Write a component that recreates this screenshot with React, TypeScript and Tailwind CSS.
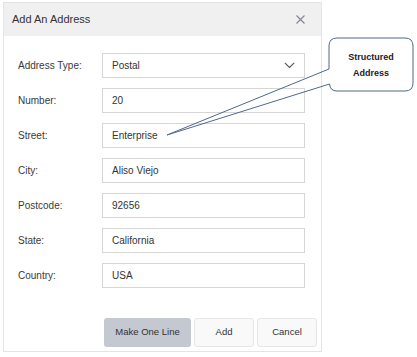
const fields = [
  { label: 'Number:', value: '20' },
  { label: 'Street:', value: 'Enterprise' },
  { label: 'City:', value: 'Aliso Viejo' },
  { label: 'Postcode:', value: '92656' },
  { label: 'State:', value: 'California' },
  { label: 'Country:', value: 'USA' },
]

function Row({ label, children }: { label: string; children: React.ReactNode }) {
  return (
    <div className="flex h-[25px] items-center">
      <span className="w-[98px] shrink-0 pl-[14px] text-[10px] text-[#3a3a3a]">{label}</span>
      {children}
    </div>
  )
}

function Callout() {
  return (
    <svg
      className="pointer-events-none absolute left-0 top-0"
      width="417"
      height="357"
      viewBox="0 0 417 357"
    >
      <path
        d="M337 38 H405 Q413 38 413 46 V83 Q413 91 405 91 H337 Q329 91 329 83 V46 Q329 38 337 38 Z"
        fill="#ffffff"
      />
      <path
        d="M329 69 V46 Q329 38 337 38 H405 Q413 38 413 46 V83 Q413 91 405 91 H337 Q330 91 329.5 84 L167 135 L329 69"
        fill="none"
        stroke="#50698a"
        strokeWidth="1"
        strokeLinejoin="round"
      />
      <text
        x="371"
        y="60"
        textAnchor="middle"
        fontFamily="'Liberation Sans', Arial, sans-serif"
        fontSize="9"
        fontWeight="700"
        fill="#222"
      >
        Structured
      </text>
      <text
        x="371"
        y="76"
        textAnchor="middle"
        fontFamily="'Liberation Sans', Arial, sans-serif"
        fontSize="9"
        fontWeight="700"
        fill="#222"
      >
        Address
      </text>
    </svg>
  )
}

export default function App() {
  return (
    <div className="relative h-[357px] w-[417px] overflow-hidden bg-white pl-[3px] pt-[2px] font-['Liberation_Sans',Arial,sans-serif]">
      <div className="flex w-[319px] flex-col border border-[#e4e4e4] bg-white">
        {/* Header */}
        <div className="flex h-[33px] items-center justify-between bg-[#f0f0f0] pl-[8px] pr-[16px]">
          <span className="text-[11px] text-[#333]">Add An Address</span>
          <svg width="9" height="9" viewBox="0 0 9 9">
            <path d="M0.5 0.5 L8.5 8.5 M8.5 0.5 L0.5 8.5" stroke="#7f8590" strokeWidth="1.1" />
          </svg>
        </div>

        {/* Body */}
        <div className="flex flex-col gap-[10px] pt-[17px]">
          <Row label="Address Type:">
            <div className="flex h-[25px] w-[203px] items-center justify-between border border-[#d6d6d6] pl-[9px] pr-[9px]">
              <span className="text-[10px] text-[#333]">Postal</span>
              <svg width="11" height="7" viewBox="0 0 11 7">
                <path d="M0.8 0.8 L5.5 5.5 L10.2 0.8" fill="none" stroke="#555" strokeWidth="1.1" />
              </svg>
            </div>
          </Row>
          {fields.map((f) => (
            <Row key={f.label} label={f.label}>
              <div className="flex h-[25px] w-[203px] items-center border border-[#d6d6d6] pl-[9px]">
                <span className="text-[10px] text-[#333]">{f.value}</span>
              </div>
            </Row>
          ))}
        </div>

        {/* Footer buttons */}
        <div className="mt-[30px] flex justify-end gap-[3px] pb-[4px] pr-[4px]">
          <button className="h-[29px] w-[87px] rounded-[3px] bg-[#c4c8d0] text-[9.5px] text-[#333]">
            Make One Line
          </button>
          <button className="h-[29px] w-[60px] rounded-[3px] border border-[#e6e6e6] bg-[#f9f9f9] text-[9.5px] text-[#333]">
            Add
          </button>
          <button className="h-[29px] w-[60px] rounded-[3px] border border-[#e6e6e6] bg-[#f9f9f9] text-[9.5px] text-[#333]">
            Cancel
          </button>
        </div>
      </div>
      <Callout />
    </div>
  )
}
